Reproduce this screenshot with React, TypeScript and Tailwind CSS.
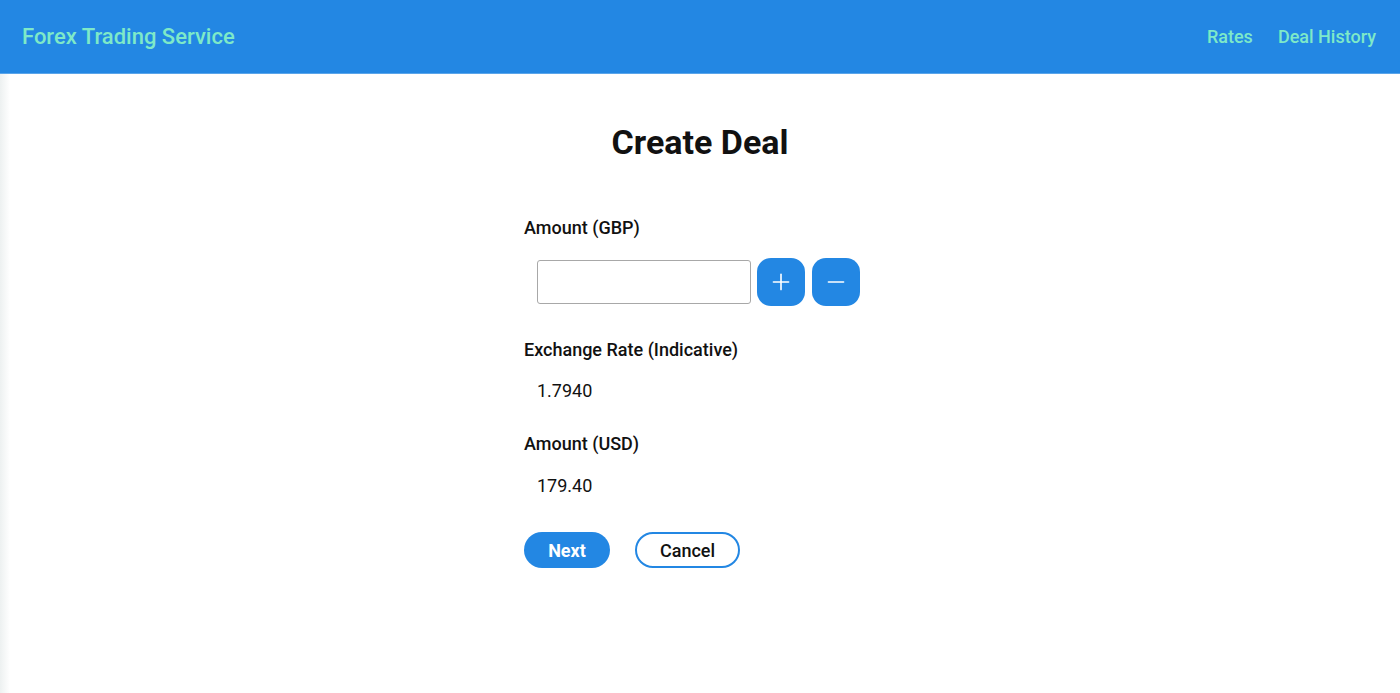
import { Plus, Minus } from "lucide-react";

export default function App() {
  const rate = 1.794;
  const amount = 100;

  return (
    <div className="min-h-[693px] bg-white text-[#111] font-['Roboto',sans-serif] flex">
      {/* faint left strip */}
      <div className="w-[10px] shrink-0 bg-gradient-to-r from-[#edf1f1] to-white mt-[74px]" />

      <div className="flex-1 -ml-[10px]">
        <header className="h-[74px] bg-[#2387e3] border-b border-[#5aa5ea] flex items-center justify-between pl-[22px] pr-[24px]">
          <div className="text-[22px] font-medium text-[#7ee9c8]">Forex Trading Service</div>
          <nav className="flex gap-[25px] text-[18px] font-medium text-[#7ee9c8]">
            <a>Rates</a>
            <a>Deal History</a>
          </nav>
        </header>

        <main>
          <h1 className="text-center text-[34px] font-bold mt-[48px] leading-[40px]">Create Deal</h1>

          <div className="w-[352px] mx-auto mt-[54px] text-[18px]">
            <label className="block leading-[24px] font-medium">Amount (GBP)</label>
            <div className="flex items-center gap-[6px] mt-[18px] ml-[13px]">
              <input className="w-[214px] h-[44px] border border-[#a8a8a8] rounded-[3px] px-2 outline-none" />
              <button className="w-[48px] h-[48px] rounded-[14px] bg-[#2387e3] text-white flex items-center justify-center">
                <Plus size={26} strokeWidth={1.5} />
              </button>
              <button className="w-[48px] h-[48px] ml-[1px] rounded-[14px] bg-[#2387e3] text-white flex items-center justify-center">
                <Minus size={26} strokeWidth={1.5} />
              </button>
            </div>

            <label className="block leading-[24px] font-medium mt-[32px]">Exchange Rate (Indicative)</label>
            <div className="ml-[13px] mt-[17px] leading-[24px]">{rate.toFixed(4)}</div>

            <label className="block leading-[24px] font-medium mt-[29px]">Amount (USD)</label>
            <div className="ml-[13px] mt-[18px] leading-[24px]">{(amount * rate).toFixed(2)}</div>

            <div className="flex gap-[25px] mt-[34px]">
              <button className="w-[86px] h-[36px] rounded-full bg-[#2387e3] text-white font-bold text-[18px]">Next</button>
              <button className="w-[105px] h-[36px] rounded-full border-2 border-[#2387e3] bg-white font-medium text-[18px]">Cancel</button>
            </div>
          </div>
        </main>
      </div>
    </div>
  );
}
